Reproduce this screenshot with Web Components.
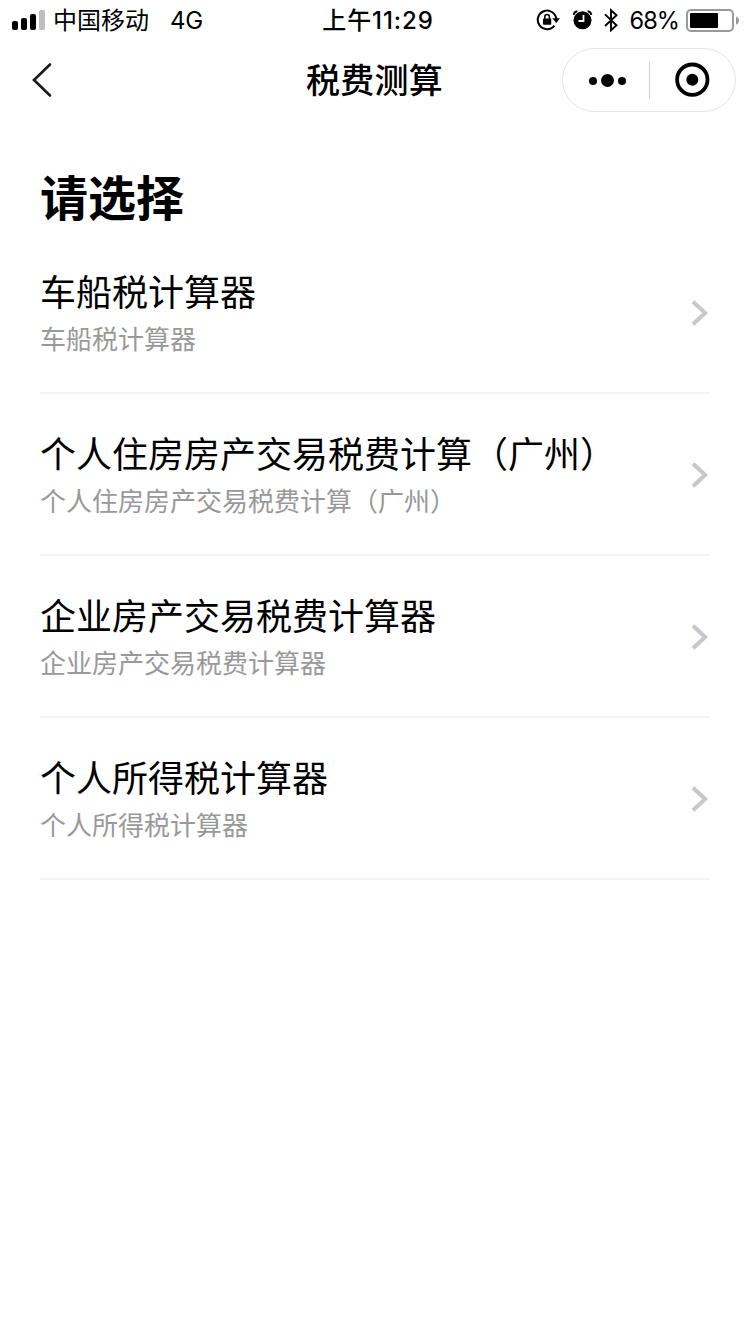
<!DOCTYPE html>
<html lang="zh-CN">
<head>
<meta charset="utf-8">
<title>税费测算</title>
<style>
html,body{margin:0;background:#fff}
body{width:750px;height:1334px;overflow:hidden;color:#000;font-family:"Noto Sans CJK SC",sans-serif}
</style>
</head>
<body>
<status-bar></status-bar>
<nav-bar>税费测算</nav-bar>
<choice-list>
  <span slot="heading">请选择</span>
  <choice-row>车船税计算器<span slot="note">车船税计算器</span></choice-row>
  <choice-row>个人住房房产交易税费计算（广州）<span slot="note">个人住房房产交易税费计算（广州）</span></choice-row>
  <choice-row>企业房产交易税费计算器<span slot="note">企业房产交易税费计算器</span></choice-row>
  <choice-row>个人所得税计算器<span slot="note">个人所得税计算器</span></choice-row>
</choice-list>
<script>
function define(name, html) {
  const template = document.createElement('template');
  template.innerHTML = html;
  customElements.define(name, class extends HTMLElement {
    constructor() {
      super();
      this.attachShadow({mode: 'open'}).append(template.content.cloneNode(true));
    }
  });
}

define('status-bar', `<style>
:host{display:grid;grid-template-columns:1fr auto 1fr;align-items:center;height:40px;font-family:"Inter","Noto Sans CJK SC",sans-serif;font-size:24px;line-height:42px;box-sizing:border-box;padding:0 11px 0 12px;white-space:nowrap}
.side{display:flex;align-items:center;height:40px}
.right{justify-content:flex-end}
svg{display:block;flex:none;margin-bottom:2px}
.carrier{margin-left:8px}
.net{margin-left:21px;letter-spacing:-.3px}
.time{font-weight:500;padding-left:5px;letter-spacing:.9px}
.pct{margin:0 7px 0 10px;font-size:23.6px;letter-spacing:-1px}
</style>
<div class="side">
<svg width="33" height="22" viewBox="0 0 33 22"><rect y="12" width="6" height="9" rx="2"/><rect x="9" y="9" width="6" height="12" rx="2"/><rect x="18" y="5" width="6" height="16" rx="2"/><rect x="27" y="1" width="6" height="20" rx="2" fill="#bfbfbf"/></svg>
<span class="carrier">中国移动</span><span class="net">4G</span></div>
<span class="time">上午11:29</span>
<div class="side right">
<svg width="84" height="24" viewBox="536 8 84 24">
<path d="M556.3 19A9.3 9.3 0 1 0 554.4 25.6" fill="none" stroke="#000" stroke-width="2"/>
<path d="M552.4 18.2H560L556.2 23Z"/>
<rect x="543" y="18.5" width="8.2" height="6.2" rx=".8"/>
<path d="M544.8 19V17a2.3 2.5 0 0 1 4.6 0v2" fill="none" stroke="#000" stroke-width="1.5"/>
<circle cx="582.5" cy="20.3" r="9"/>
<path d="M583.5 15v6H578.5" fill="none" stroke="#fff" stroke-width="1.8"/>
<path d="M573.7 14.8Q574.2 11.5 577.4 11.2M587.6 11.2Q590.8 11.5 591.3 14.8" fill="none" stroke="#000" stroke-width="2"/>
<path d="M605 14.4 616.5 25.3 611 30.3V10.2L616.5 15.2 605 26" fill="none" stroke="#000" stroke-width="1.9"/>
</svg>
<span class="pct">68%</span>
<svg width="53" height="24" viewBox="686 8 53 24"><rect x="687" y="10" width="46" height="21" rx="4" fill="none" stroke="#999" stroke-width="2"/><rect x="690" y="13" width="28" height="15" rx="1"/><path d="M736 16.5q3 1 3 4t-3 4z" fill="#999"/></svg>
</div>`);

define('nav-bar', `<style>
:host{display:grid;grid-template-columns:1fr auto 1fr;align-items:center;height:80px;padding:0 14px 0 30px;box-sizing:border-box}
.back{display:block}
h1{margin:0;font-size:34px;line-height:48px;font-weight:500;letter-spacing:.25px;padding:0 17px 3px 0}
.capsule{justify-self:end;box-sizing:border-box;width:174px;height:64px;border:1px solid #e5e5e5;border-radius:32px;display:grid;grid-template-columns:86px 1px 85px;align-items:center}
.line{height:37px;background:#d0d0d0}
svg{display:block}
</style>
<svg class="back" width="24" height="38" viewBox="30 61 24 38"><path d="M50 64.5 34 80 50 95.5" fill="none" stroke="#1a1a1a" stroke-width="2.6" stroke-linecap="round"/></svg>
<h1><slot></slot></h1>
<div class="capsule">
<svg width="86" height="62" viewBox="563 49 86 62"><circle cx="593" cy="81" r="4"/><circle cx="607.5" cy="80.5" r="6.5"/><circle cx="622" cy="81" r="4"/></svg>
<div class="line"></div>
<svg width="85" height="62" viewBox="650 49 85 62"><circle cx="692.3" cy="79.7" r="15.2" fill="none" stroke="#000" stroke-width="3.8"/><circle cx="692.3" cy="79.7" r="6"/></svg>
</div>`);

define('choice-list', `<style>
:host{display:block;padding:40px 40px 0}
h2{margin:0;height:72px;line-height:70px;font-size:48px;font-weight:700}
</style>
<h2><slot name="heading"></slot></h2>
<slot></slot>`);

define('choice-row', `<style>
:host{display:flex;align-items:center;justify-content:space-between;height:162px;box-sizing:border-box;border-bottom:2px solid #f4f4f4;font-size:36px;white-space:nowrap}
.text{padding-bottom:3px}
.title{line-height:50px}
.note{font-size:26px;line-height:36px;margin-top:5px;color:#999}
svg{display:block;margin:2px 1px 0 0}
</style>
<div class="text"><div class="title"><slot></slot></div><div class="note"><slot name="note"></slot></div></div>
<svg width="19" height="28" viewBox="0 0 19 28"><path d="M3 2.7 15.2 14 3 25.3" fill="none" stroke="#c7c7cc" stroke-width="4"/></svg>`);
</script>
</body>
</html>
